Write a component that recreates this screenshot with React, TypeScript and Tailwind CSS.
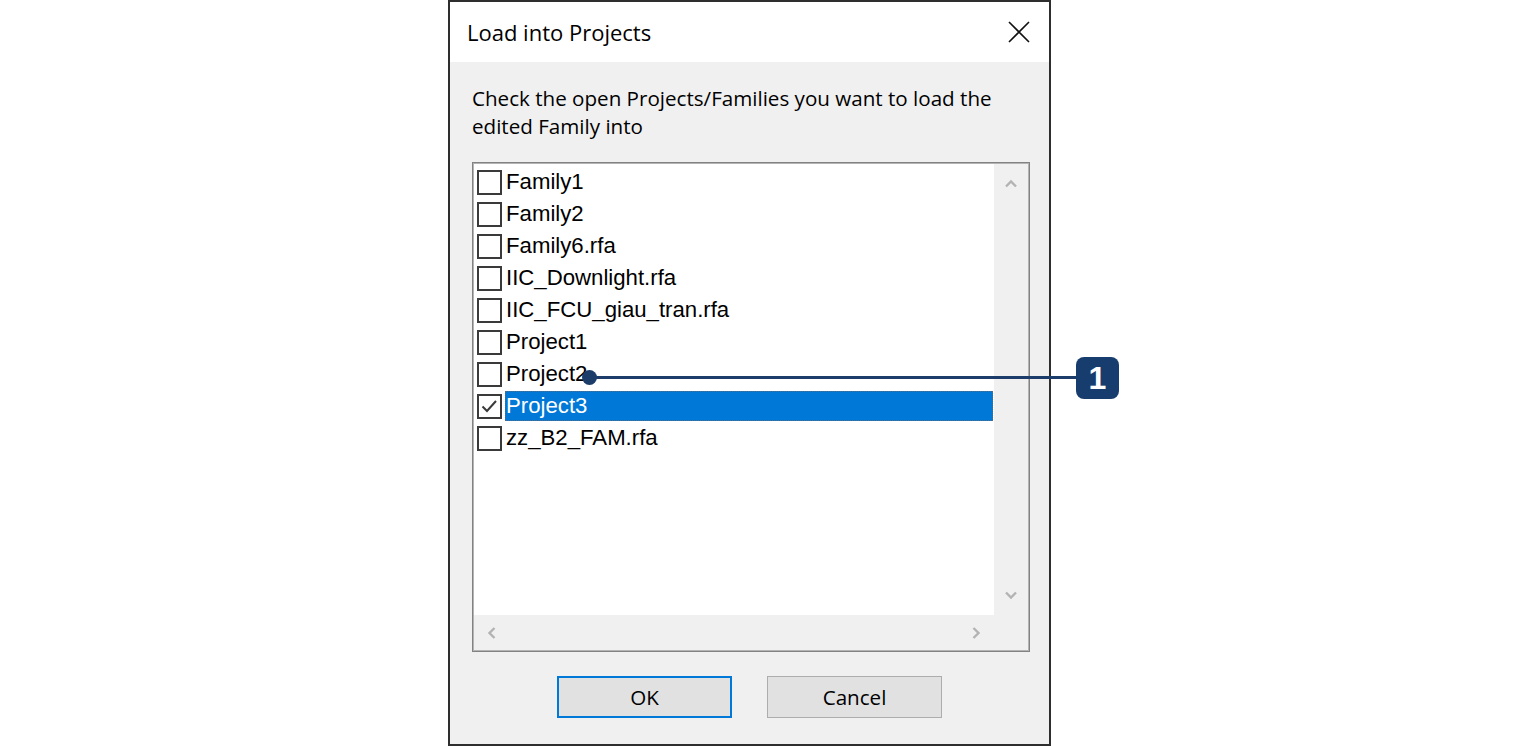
const ui = '"Open Sans", "Liberation Sans", sans-serif'
const list = '"Liberation Sans", Arial, sans-serif'

const items = [
  'Family1',
  'Family2',
  'Family6.rfa',
  'IIC_Downlight.rfa',
  'IIC_FCU_giau_tran.rfa',
  'Project1',
  'Project2',
  'Project3',
  'zz_B2_FAM.rfa',
]

function Chevron({ dir }: { dir: 'up' | 'down' | 'left' | 'right' }) {
  const pts = {
    up: '3,10.5 8,5.5 13,10.5',
    down: '3,5.5 8,10.5 13,5.5',
    left: '10.5,3 5.5,8 10.5,13',
    right: '5.5,3 10.5,8 5.5,13',
  }[dir]
  return (
    <svg width="16" height="16" viewBox="0 0 16 16">
      <polyline points={pts} fill="none" stroke="#b3b3b3" strokeWidth="2.4" />
    </svg>
  )
}

function CheckBox({ checked }: { checked: boolean }) {
  return (
    <div className="flex h-[25px] w-[25px] shrink-0 items-center justify-center border-2 border-[#3a3a3a]">
      {checked && (
        <svg width="19" height="19" viewBox="0 0 19 19">
          <polyline points="2.5,9.5 7,14 16,4" fill="none" stroke="#3a3a3a" strokeWidth="2" />
        </svg>
      )}
    </div>
  )
}

export default function App() {
  const selected = 'Project3'
  return (
    <div className="relative h-[746px] w-[1520px] overflow-hidden bg-white">
      <div
        className="ml-[448px] flex h-[746px] w-[603px] flex-col border-2 border-[#2e2e2e] bg-[#f0f0f0]"
        style={{ fontFamily: ui }}
      >
        {/* title bar */}
        <div className="flex h-[60px] shrink-0 items-center justify-between bg-white pl-[17px] pr-[19px]">
          <span className="text-[22px] text-black">Load into Projects</span>
          <svg width="22" height="22" viewBox="0 0 22 22">
            <path d="M1 1 L21 21 M21 1 L1 21" stroke="#111" strokeWidth="1.6" />
          </svg>
        </div>

        <div className="flex flex-col pl-[22px] pr-[19px] pt-[22px]">
          <p className="text-[20.6px] leading-[28px] text-black">
            Check the open Projects/Families you want to load the
            <br />
            edited Family into
          </p>

          {/* checked list box */}
          <div className="mt-[22px] h-[490px] w-[558px] border border-[#828282]">
            <div className="grid h-full grid-cols-[1fr_34px] grid-rows-[1fr_35px] border border-[#b4b4b4]">
              <div className="bg-white pl-[3px] pt-[2px]" style={{ fontFamily: list }}>
                {items.map((it) => {
                  const sel = it === selected
                  return (
                    <div key={it} className="flex h-[32px] items-center">
                      <CheckBox checked={sel} />
                      <div
                        className={`ml-[3px] mr-[1px] flex h-[30px] flex-1 items-center text-[22.2px] ${
                          sel ? 'bg-[#0078d7] text-white outline outline-1 outline-dotted outline-[#5a6b80] -outline-offset-1' : 'text-black'
                        }`}
                      >
                        <span className="pl-[1px]">{it}</span>
                      </div>
                    </div>
                  )
                })}
              </div>
              <div className="flex flex-col items-center justify-between bg-[#f0f0f0] py-[12px]">
                <Chevron dir="up" />
                <Chevron dir="down" />
              </div>
              <div className="flex items-center justify-between bg-[#f0f0f0] px-[10px]">
                <Chevron dir="left" />
                <Chevron dir="right" />
              </div>
              <div className="bg-[#f0f0f0]" />
            </div>
          </div>

          <div className="mt-[24px] flex justify-center gap-[35px] pr-[3px]">
            <button className="h-[42px] w-[175px] border-2 border-[#0078d7] bg-[#e1e1e1] text-[20.6px] text-black">
              OK
            </button>
            <button className="h-[42px] w-[175px] border border-[#adadad] bg-[#e1e1e1] text-[20.6px] text-black">
              Cancel
            </button>
          </div>
        </div>
      </div>

      {/* callout */}
      <div className="absolute left-[582px] top-[370px] h-[15px] w-[15px] rounded-full bg-[#1c3c69]" />
      <div className="absolute left-[590px] top-[376px] h-[3px] w-[488px] bg-[#1c3c69]" />
      <div
        className="absolute left-[1076px] top-[357px] flex h-[42px] w-[43px] items-center justify-center rounded-[8px] bg-[#173d6e] text-[32px] font-bold text-white"
        style={{ fontFamily: list }}
      >
        1
      </div>
    </div>
  )
}
